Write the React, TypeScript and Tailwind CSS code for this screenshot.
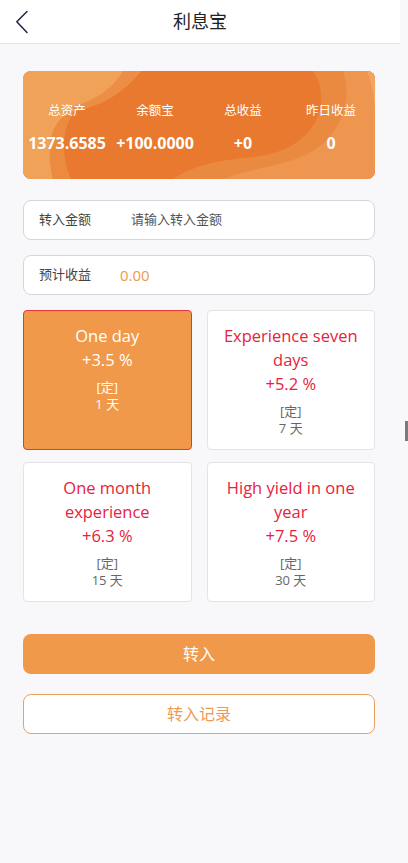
import { useState } from 'react';

type Plan = {
  title: string;
  rate: string;
  days: string;
};

const PLANS: Plan[] = [
  { title: 'One day', rate: '+3.5 %', days: '1 天' },
  { title: 'Experience seven days', rate: '+5.2 %', days: '7 天' },
  { title: 'One month experience', rate: '+6.3 %', days: '15 天' },
  { title: 'High yield in one year', rate: '+7.5 %', days: '30 天' },
];

const STATS = [
  { label: '总资产', value: '1373.6585' },
  { label: '余额宝', value: '+100.0000' },
  { label: '总收益', value: '+0' },
  { label: '昨日收益', value: '0' },
];

const font = "font-['Open_Sans','Noto_Sans_CJK_SC',sans-serif]";

function BackIcon() {
  return (
    <svg width="14" height="24" viewBox="0 0 14 24" fill="none" aria-hidden="true">
      <path d="M12 1.5 1.8 11.8 12 22.5" stroke="#222244" strokeWidth="1.5" strokeLinecap="round" strokeLinejoin="round" />
    </svg>
  );
}

function Waves() {
  return (
    <svg className="absolute inset-0 h-full w-full" viewBox="0 0 352 108" preserveAspectRatio="none" aria-hidden="true">
      <rect width="352" height="108" fill="#e8792f" />
      <path d="M0 0H118C100 22 80 34 52 40 30 46 22 70 30 108H0Z" fill="#f0a258" />
      <path d="M52 40C80 34 100 22 118 0H100C88 20 70 30 48 36Z" fill="#ec8e45" />
      <path d="M30 108C22 70 30 46 52 40 36 60 40 90 48 108Z" fill="#ec8a40" />
      <path d="M150 108C190 82 230 92 262 78 300 60 306 24 290 0H352V108Z" fill="#ea8a40" />
      <path d="M200 108C230 96 262 96 290 80 318 62 330 30 320 0H352V108Z" fill="#ee9550" />
      <path d="M344 0C352 20 352 40 352 52V0Z" fill="#f3a45e" />
    </svg>
  );
}

export default function App() {
  const [selected, setSelected] = useState(0);
  const [amount, setAmount] = useState('');

  return (
    <div className={`relative min-h-[863px] w-[408px] bg-[#f8f8fa] ${font}`}>
      <div className="w-[400px]">
        <header className="relative flex h-[44px] items-center justify-center border-b border-[#e6e6e8] bg-white">
          <button className="absolute left-[15px] top-[10px]">
            <BackIcon />
          </button>
          <h1 className="text-[18px] text-[#222]">利息宝</h1>
        </header>

        <div className="pl-[23px] pr-[25px] pt-[27px]">
          <div className="relative h-[108px] overflow-hidden rounded-[8px]">
            <Waves />
            <div className="relative grid h-full grid-cols-4 pt-[31px] text-white">
              {STATS.map((s) => (
                <div key={s.label} className="flex flex-col items-center">
                  <span className="text-[12.5px] leading-[18px]">{s.label}</span>
                  <span className="mt-[14px] text-[16px] font-bold leading-[18px]">{s.value}</span>
                </div>
              ))}
            </div>
          </div>

          <label className="mt-[21px] flex h-[40px] items-center rounded-[8px] border border-[#d6d6d8] bg-white pl-[15px] text-[13px]">
            <span className="w-[92px] text-[#444]">转入金额</span>
            <input
              value={amount}
              onChange={(e) => setAmount(e.target.value)}
              placeholder="请输入转入金额"
              className="flex-1 bg-transparent text-[13px] text-[#333] outline-none placeholder:text-[#555]"
            />
          </label>

          <div className="mt-[15px] flex h-[40px] items-center rounded-[8px] border border-[#d6d6d8] bg-white pl-[15px]">
            <span className="w-[81px] text-[13px] text-[#444]">预计收益</span>
            <span className="text-[15px] text-[#f0994a]">0.00</span>
          </div>

          <div className="mt-[15px] grid grid-cols-2 gap-x-[15px] gap-y-[12px]">
            {PLANS.map((p, i) => {
              const active = i === selected;
              return (
                <button
                  key={p.title}
                  onClick={() => setSelected(i)}
                  className={`flex h-[140px] flex-col items-center rounded-[4px] border px-[14px] pt-[13px] text-center ${
                    active ? 'border-[#e8343c] bg-[#f0994a] text-white' : 'border-[#e4e4e6] bg-white text-[#e8223c]'
                  }`}
                >
                  <span className="text-[16.5px] leading-[24px]">{p.title}</span>
                  <span className="text-[16.5px] leading-[24px]">{p.rate}</span>
                  <span className={`mt-[7px] text-[13px] leading-[17px] ${active ? 'text-white' : 'text-[#666]'}`}>[定]</span>
                  <span className={`text-[13px] leading-[17px] ${active ? 'text-white' : 'text-[#666]'}`}>{p.days}</span>
                </button>
              );
            })}
          </div>

          <button className="mt-[32px] flex h-[40px] w-full items-center justify-center rounded-[8px] bg-[#f0994a] text-[16px] text-white">
            转入
          </button>
          <button className="mt-[20px] flex h-[40px] w-full items-center justify-center rounded-[8px] border border-[#eda060] bg-white text-[16px] text-[#ee9a52]">
            转入记录
          </button>
        </div>
      </div>
      <div className="absolute left-[405px] top-[421px] h-[20px] w-[3px] bg-[#7a7a7a]" />
    </div>
  );
}
